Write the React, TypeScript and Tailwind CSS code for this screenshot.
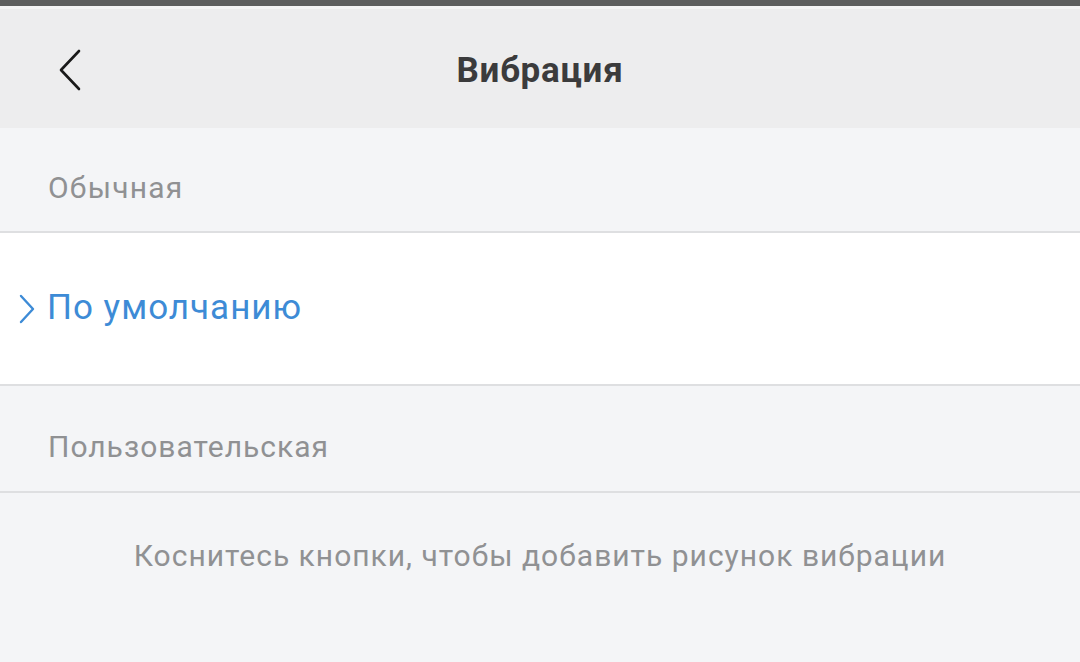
import React from 'react';

const font = { fontFamily: 'Roboto, "Noto Sans", sans-serif' };

const BackIcon = () => (
  <svg width="26" height="42" viewBox="0 0 26 42" fill="none">
    <path d="M21 2 L3 21 L21 40" stroke="#1a1a1a" strokeWidth="2.6" strokeLinecap="round" strokeLinejoin="round" />
  </svg>
);

const ChevronRight = () => (
  <svg width="16" height="30" viewBox="0 0 16 30" fill="none">
    <path d="M2 2 L14 15 L2 28" stroke="#3d8bd6" strokeWidth="2.4" strokeLinecap="round" strokeLinejoin="round" />
  </svg>
);

export default function App() {
  return (
    <div className="w-[1080px] h-[662px] flex flex-col bg-[#f4f5f7] overflow-hidden" style={font}>
      {/* status strip */}
      <div className="h-[6px] bg-[#5e5f5f]" />
      <div className="h-[3px] bg-[#f5f5f6]" />

      {/* Header */}
      <div className="relative h-[119px] bg-[#ededee] flex items-center justify-center pt-[5px]">
        <div className="absolute left-[58px] top-[40px]">
          <BackIcon />
        </div>
        <h1 className="text-[35px] font-bold text-[#3b3b3c] tracking-[0.75px]">Вибрация</h1>
      </div>

      {/* Обычная */}
      <div className="h-[105px] flex items-center px-[48px] pt-[16px] border-b-2 border-[#dedfe1]">
        <span className="text-[30px] tracking-[1.2px] text-[#909193]">Обычная</span>
      </div>

      <div className="h-[153px] bg-white flex items-center pl-[19px] border-b-2 border-[#dedfe1]">
        <ChevronRight />
        <span className="ml-[12px] text-[35px] tracking-[1px] text-[#3d8bd6]">По умолчанию</span>
      </div>

      {/* Пользовательская */}
      <div className="h-[107px] flex items-center px-[48px] pt-[16px] border-b-2 border-[#dedfe1]">
        <span className="text-[30px] tracking-[1px] text-[#909193]">Пользовательская</span>
      </div>

      <div className="h-[124px] flex items-center justify-center pt-[1px]">
        <span className="text-[30px] tracking-[1px] text-[#909193]">Коснитесь кнопки, чтобы добавить рисунок вибрации</span>
      </div>
    </div>
  );
}
